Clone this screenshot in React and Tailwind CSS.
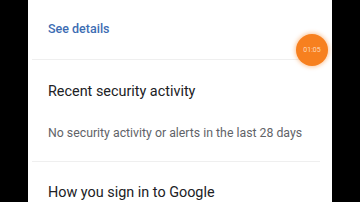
import React from "react";

export default function App() {
  return (
    <div className="relative flex h-[202px] w-[360px] overflow-hidden bg-black font-['Roboto',sans-serif]">
      <div className="w-[28px] shrink-0 bg-black" />
      <div className="w-[304px] shrink-0 bg-white">
        <div className="pl-[20px] pt-[21px] text-[12.5px] font-medium leading-[16px] text-[#3d6db3]">
          See details
        </div>
        <div className="ml-[4px] mr-[12px] mt-[22px] h-px bg-[#efefef]" />
        <div className="pl-[20px] pt-[22px] text-[14.4px] leading-[20px] text-[#202124]">
          Recent security activity
        </div>
        <div className="pl-[20px] pt-[23px] text-[12.3px] leading-[16px] text-[#5f6368]">
          No security activity or alerts in the last 28 days
        </div>
        <div className="ml-[4px] mr-[12px] mt-[20px] h-px bg-[#efefef]" />
        <div className="pl-[20px] pt-[21px] text-[14.4px] leading-[20px] text-[#202124]">
          How you sign in to Google
        </div>
      </div>
      <div className="flex-1 bg-black" />

      <div className="absolute left-[296px] top-[34px] flex h-[32px] w-[32px] items-center justify-center rounded-full bg-[#f7801f] shadow-[0_0_4px_1px_rgba(247,128,31,0.45)]">
        <span className="text-[7px] leading-none text-[#ffd9b8]">01:05</span>
      </div>
    </div>
  );
}
